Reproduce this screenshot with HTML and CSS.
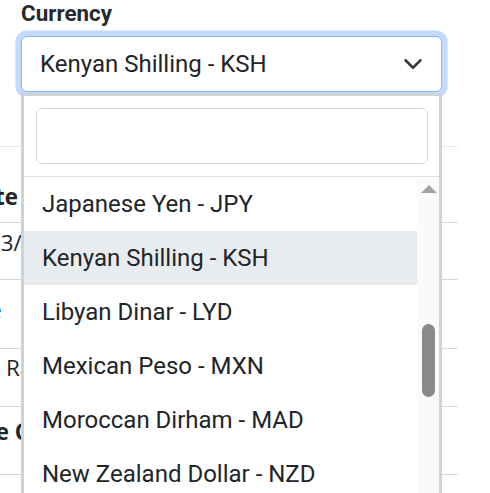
FILE: index.html
```html
<!DOCTYPE html>
<html lang="en">
<head>
<meta charset="utf-8">
<title>Currency</title>
<link rel="stylesheet" href="styles.css">
</head>
<body>
<div class="page">
  <div class="field">
    <label class="label">Currency</label>
    <div class="select">
      <span class="select-value">Kenyan Shilling - KSH</span>
      <svg class="chevron" viewBox="0 0 16 16" aria-hidden="true"><path d="M2 5l6 6 6-6" fill="none" stroke="#343a40" stroke-width="2" stroke-linecap="round" stroke-linejoin="round"/></svg>
    </div>
    <div class="dropdown">
      <div class="search"><input class="search-input" type="text" aria-label="Search"></div>
      <div class="results">
        <ul class="options">
          <li class="option">Japanese Yen - JPY</li>
          <li class="option active">Kenyan Shilling - KSH</li>
          <li class="option">Libyan Dinar - LYD</li>
          <li class="option">Mexican Peso - MXN</li>
          <li class="option">Moroccan Dirham - MAD</li>
          <li class="option">New Zealand Dollar - NZD</li>
        </ul>
        <div class="scrollbar">
          <span class="arrow-up"></span>
          <span class="thumb"></span>
        </div>
      </div>
    </div>
  </div>
  <div class="card">
    <div class="row row-head"><span class="cell bold t-date">Date</span></div>
    <div class="row row-1"><span class="cell t-num">03/28/2024</span></div>
    <div class="row row-2"><span class="cell link t-link">Rate</span></div>
    <div class="row row-3"><span class="cell t-r">Rate</span></div>
    <div class="row row-4"><span class="cell bold t-base">Base Currency</span></div>
    <div class="row row-5"></div>
  </div>
</div>
</body>
</html>
```

FILE: styles.css
```css
html, body {
  margin: 0;
  padding: 0;
  background: #ffffff;
}

body {
  width: 490px;
  height: 493px;
  overflow: hidden;
  font-family: Roboto, "Liberation Sans", sans-serif;
  color: #212529;
}

.page {
  position: relative;
}

.field {
  position: relative;
  padding-left: 21px;
}

.label {
  display: block;
  font-size: 22.4px;
  line-height: 26px;
  font-weight: 700;
  color: #262a2e;
}

.select {
  box-sizing: border-box;
  margin-top: 10px;
  width: 421px;
  height: 56px;
  border: 1px solid #86b7fe;
  border-radius: 6px;
  box-shadow: 0 0 0 5.6px #c2dafe;
  display: flex;
  align-items: center;
  padding: 0 18px 0 18px;
  background: #ffffff;
}

.select-value {
  flex: 1;
  font-size: 24px;
  line-height: 30px;
  color: #212529;
  white-space: nowrap;
}

.chevron {
  width: 20px;
  height: 20px;
  flex: none;
}

.dropdown {
  position: absolute;
  left: 21px;
  top: 93px;
  box-sizing: border-box;
  width: 421px;
  border: 3px solid #ced3da;
  background: #ffffff;
  z-index: 2;
}

.search {
  padding: 12px 11px 12px 12px;
  border-bottom: 1px solid #dee2e6;
}

.search-input {
  display: block;
  box-sizing: border-box;
  width: 100%;
  height: 56px;
  margin: 0;
  border: 1px solid #d6dadf;
  border-radius: 6px;
  background: #ffffff;
  outline: none;
  font: inherit;
}

.results {
  display: flex;
  height: 330px;
}

.options {
  list-style: none;
  margin: 0;
  padding: 0;
  flex: 1;
}

.option {
  height: 54px;
  display: flex;
  align-items: center;
  padding-left: 18px;
  font-size: 24px;
  color: #212529;
  white-space: nowrap;
}

.option.active {
  background: #e9ecef;
}

.scrollbar {
  width: 22px;
  flex: none;
  background: #fafafa;
  display: flex;
  flex-direction: column;
  align-items: center;
}

.arrow-up {
  display: block;
  width: 0;
  height: 0;
  margin-top: 8px;
  margin-left: 1px;
  border-left: 8px solid transparent;
  border-right: 8px solid transparent;
  border-bottom: 8px solid #a3a3a3;
}

.thumb {
  display: block;
  width: 13px;
  height: 73px;
  margin-top: 131px;
  margin-left: 1px;
  border-radius: 7px;
  background: #8a8a8a;
}

/* background card / table partially hidden behind the dropdown */
.card {
  margin-top: 54px;
  width: 458px;
  border-top: 1px solid #e7e8ea;
  font-family: "Open Sans", "Liberation Sans", sans-serif;
  font-size: 22.4px;
  line-height: 33.6px;
  color: #212529;
}

.row {
  box-sizing: border-box;
  border-bottom: 1px solid #d3d7dc;
  white-space: nowrap;
  overflow: hidden;
}

.row-head { height: 76px; padding-top: 33px; }
.row-1 { height: 57px; padding-top: 3px; }
.row-2 { height: 69px; padding-top: 13px; }
.row-3 { height: 58px; padding-top: 2px; }
.row-4 { height: 68px; padding-top: 8px; }
.row-5 { height: 60px; border-bottom: none; }

.cell {
  display: inline-block;
}

.bold {
  font-weight: 700;
}

.link {
  color: #0d6efd;
}

.t-date { margin-left: -35px; }
.t-num { margin-left: -12px; }
.t-link { margin-left: -45px; }
.t-r { margin-left: 6px; }
.t-base { margin-left: -44px; }
```
